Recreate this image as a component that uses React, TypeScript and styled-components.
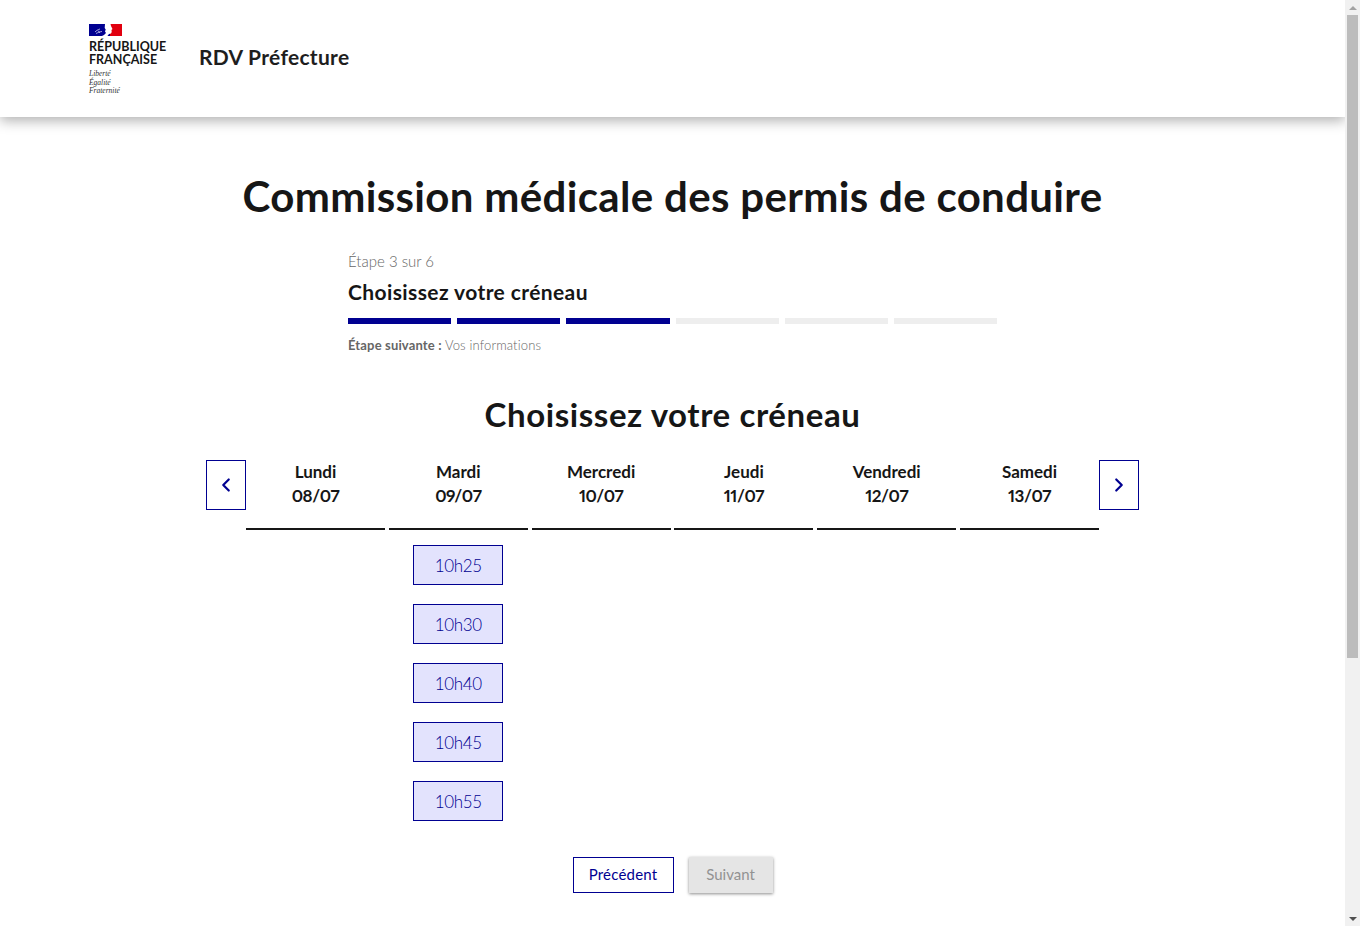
import styled, { createGlobalStyle } from "styled-components";
import { ChevronLeft, ChevronRight } from "lucide-react";

const GlobalStyle = createGlobalStyle`
  body {
    margin: 0;
    background: #ffffff;
    color: #161616;
    font-family: "Lato", "Noto Sans", "Liberation Sans", sans-serif;
  }
`;

const Shell = styled.div`
  display: flex;
  height: 100vh;
  overflow: hidden;
`;

const Page = styled.div`
  flex: 1;
  min-width: 0;
  overflow: hidden;
`;

const ScrollBar = styled.div`
  display: flex;
  flex: none;
  flex-direction: column;
  align-items: center;
  width: 15px;
  background: #f1f1f1;
`;

const ArrowBox = styled.div`
  display: flex;
  flex: none;
  align-items: center;
  justify-content: center;
  width: 15px;
  height: 15px;
`;

const ArrowUp = styled.div`
  border-right: 4px solid transparent;
  border-bottom: 4px solid #a3a3a3;
  border-left: 4px solid transparent;
`;

const ArrowDown = styled.div`
  border-top: 4px solid #505050;
  border-right: 4px solid transparent;
  border-left: 4px solid transparent;
`;

const Thumb = styled.div`
  flex: none;
  width: 11px;
  height: 643px;
  background: #bcbcbc;
`;

const TrackRest = styled.div`
  flex: 1;
`;

const Header = styled.header`
  display: flex;
  align-items: flex-start;
  gap: 32px;
  box-sizing: border-box;
  height: 117px;
  padding: 24px 0 0 89px;
  background: #ffffff;
  box-shadow: 0 4px 12px rgba(0, 0, 0, 0.3);
`;

const Logo = styled.div`
  display: flex;
  flex-direction: column;
  width: 78px;
`;

const Flag = styled.svg`
  display: block;
  width: 33px;
  height: 12px;
  margin-bottom: 4px;
`;

const LogoName = styled.div`
  font-size: 12.5px;
  font-weight: 700;
  line-height: 13px;
  white-space: nowrap;
  color: #161616;
`;

const Motto = styled.div`
  margin-top: 4px;
  font-family: "Liberation Serif", serif;
  font-size: 7.5px;
  font-style: italic;
  line-height: 8.5px;
  color: #333333;
`;

const ServiceName = styled.div`
  margin-top: 20px;
  font-size: 21px;
  font-weight: 700;
  line-height: 26px;
  letter-spacing: 0.3px;
  color: #1e1e1e;
`;

const Main = styled.main`
  display: flex;
  flex-direction: column;
  align-items: center;
  padding-top: 55px;
`;

const Title = styled.h1`
  margin: 0;
  font-size: 42px;
  font-weight: 700;
  line-height: 48px;
  letter-spacing: 0.33px;
  white-space: nowrap;
  color: #161616;
`;

const Stepper = styled.div`
  width: 649px;
  margin-top: 29px;
`;

const StepCount = styled.div`
  font-size: 15px;
  font-weight: 300;
  line-height: 24px;
  color: #666666;
`;

const StepTitle = styled.div`
  margin-top: 7px;
  font-size: 21px;
  font-weight: 700;
  line-height: 24px;
  letter-spacing: 0.4px;
  color: #161616;
`;

const Steps = styled.div`
  display: flex;
  gap: 6px;
  margin-top: 14px;
`;

const Step = styled.div<{ $done?: boolean }>`
  flex: 1;
  height: 6px;
  background: ${(p) => (p.$done ? "#000091" : "#eeeeee")};
`;

const NextStep = styled.div`
  margin-top: 11px;
  font-size: 13px;
  font-weight: 300;
  line-height: 20px;
  letter-spacing: 0.15px;
  color: #666666;

  strong {
    font-weight: 700;
  }
`;

const SectionTitle = styled.h2`
  margin: 39px 0 0;
  font-size: 33px;
  font-weight: 700;
  line-height: 40px;
  letter-spacing: 0.58px;
  color: #161616;
`;

const Calendar = styled.div`
  display: flex;
  align-items: flex-start;
  width: 933px;
  margin-top: 26px;
`;

const NavButton = styled.button`
  display: flex;
  flex: none;
  align-items: center;
  justify-content: center;
  width: 40px;
  height: 50px;
  padding: 0;
  border: 1px solid #000091;
  background: #ffffff;
  color: #000091;
`;

const Days = styled.div`
  display: grid;
  flex: 1;
  grid-template-columns: repeat(6, 139px);
  justify-content: space-between;
`;

const Day = styled.div`
  display: flex;
  flex-direction: column;
  align-items: center;
`;

const DayHead = styled.div`
  width: 100%;
  height: 68px;
  border-bottom: 2px solid #161616;
  font-size: 17px;
  font-weight: 700;
  line-height: 24px;
  text-align: center;
  color: #161616;
`;

const DayDate = styled.div`
  font-variant-numeric: proportional-nums;
  letter-spacing: -0.4px;
`;

const Slots = styled.div`
  display: flex;
  flex-direction: column;
  gap: 19px;
  margin-top: 15px;
`;

const Slot = styled.button`
  width: 90px;
  height: 40px;
  padding: 1px 0 0;
  border: 1px solid #000091;
  background: #e3e3fd;
  color: #000091;
  font-family: inherit;
  font-size: 17px;
  font-weight: 300;
  letter-spacing: -0.3px;
`;

const Actions = styled.div`
  display: flex;
  gap: 15px;
  margin-top: 36px;
`;

const Previous = styled.button`
  width: 101px;
  height: 36px;
  padding: 0 0 2px;
  border: 1px solid #000091;
  background: #ffffff;
  color: #000091;
  font-family: inherit;
  font-size: 15px;
  letter-spacing: 0.2px;
`;

const Next = styled.button`
  width: 84px;
  height: 36px;
  padding: 0 0 2px;
  border: 0;
  background: #e5e5e5;
  box-shadow: 0 1px 3px rgba(0, 0, 0, 0.45);
  color: #929292;
  font-family: inherit;
  font-size: 15px;
`;

const days = [
  { name: "Lundi", date: "08/07", slots: [] as string[] },
  { name: "Mardi", date: "09/07", slots: ["10h25", "10h30", "10h40", "10h45", "10h55"] },
  { name: "Mercredi", date: "10/07", slots: [] as string[] },
  { name: "Jeudi", date: "11/07", slots: [] as string[] },
  { name: "Vendredi", date: "12/07", slots: [] as string[] },
  { name: "Samedi", date: "13/07", slots: [] as string[] },
];

const App = () => {
  return (
    <Shell>
      <GlobalStyle />
      <Page>
        <Header>
          <Logo>
            <Flag viewBox="0 0 33 12">
              <rect width="33" height="12" fill="#000091" />
              <rect x="21" width="12" height="12" fill="#e1000f" />
              <path
                d="M16 0h5.500l.5 2 1.500 3-1 1 .2 2-.7 1.500-2 .5-2 2.500h-6l3-1.500 2-2-1-1.500 .7-2-1-1.500z"
                fill="#ffffff"
              />
              <path
                d="M6 8c1.500-1.500 3-2.500 5-3M7 9.500c2-1 4-2 6-2M9 6.500l2 2.500"
                fill="none"
                stroke="#c9c9ee"
                strokeWidth="0.8"
              />
            </Flag>
            <LogoName>
              RÉPUBLIQUE
              <br />
              FRANÇAISE
            </LogoName>
            <Motto>
              Liberté
              <br />
              Égalité
              <br />
              Fraternité
            </Motto>
          </Logo>
          <ServiceName>RDV Préfecture</ServiceName>
        </Header>
        <Main>
          <Title>Commission médicale des permis de conduire</Title>
          <Stepper>
            <StepCount>Étape 3 sur 6</StepCount>
            <StepTitle>Choisissez votre créneau</StepTitle>
            <Steps>
              {[0, 1, 2, 3, 4, 5].map((i) => (
                <Step key={i} $done={i < 3} />
              ))}
            </Steps>
            <NextStep>
              <strong>Étape suivante :</strong> Vos informations
            </NextStep>
          </Stepper>
          <SectionTitle>Choisissez votre créneau</SectionTitle>
          <Calendar>
            <NavButton aria-label="Précédent">
              <ChevronLeft size={22} strokeWidth={2.4} />
            </NavButton>
            <Days>
              {days.map((day) => (
                <Day key={day.date}>
                  <DayHead>
                    {day.name}
                    <DayDate>{day.date}</DayDate>
                  </DayHead>
                  <Slots>
                    {day.slots.map((slot) => (
                      <Slot key={slot}>{slot}</Slot>
                    ))}
                  </Slots>
                </Day>
              ))}
            </Days>
            <NavButton aria-label="Suivant">
              <ChevronRight size={22} strokeWidth={2.4} />
            </NavButton>
          </Calendar>
          <Actions>
            <Previous>Précédent</Previous>
            <Next disabled>Suivant</Next>
          </Actions>
        </Main>
      </Page>
      <ScrollBar>
        <ArrowBox>
          <ArrowUp />
        </ArrowBox>
        <Thumb />
        <TrackRest />
        <ArrowBox>
          <ArrowDown />
        </ArrowBox>
      </ScrollBar>
    </Shell>
  );
};

export default App;
